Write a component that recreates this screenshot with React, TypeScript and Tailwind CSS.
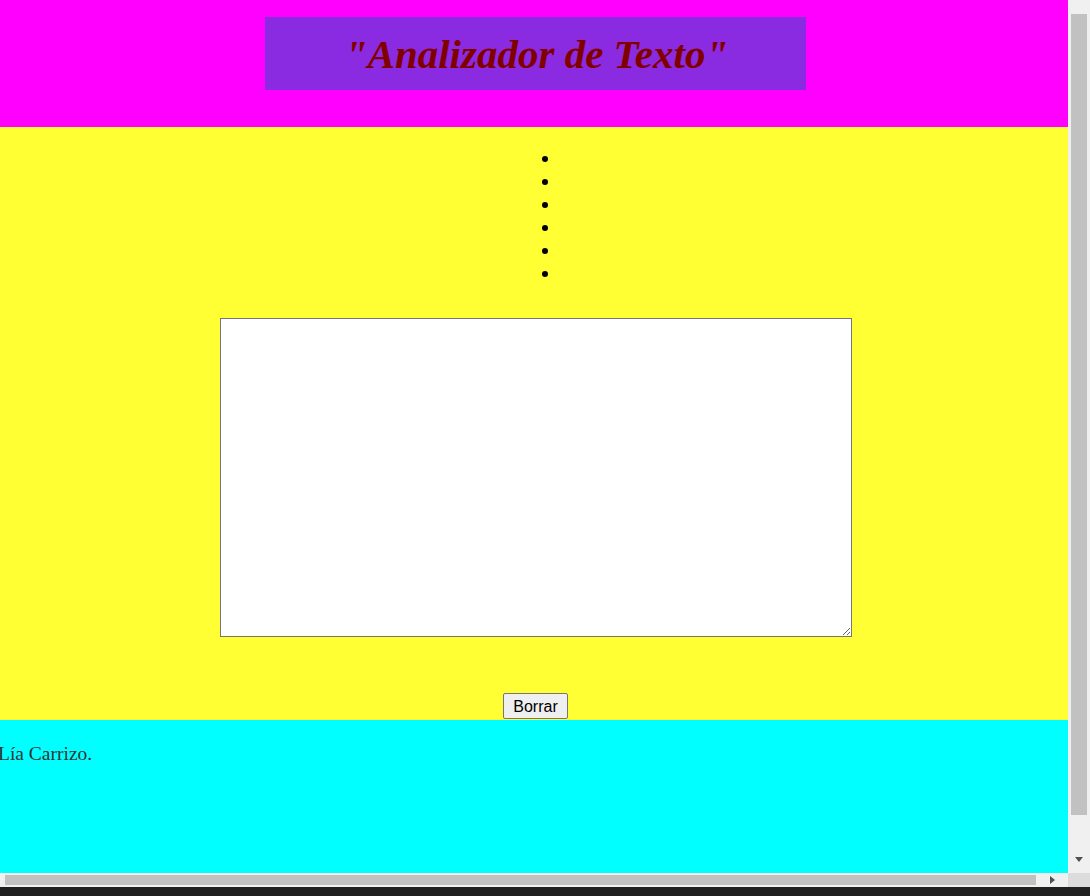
import React from 'react';

export default function App() {
  const items = [1, 2, 3, 4, 5, 6];
  return (
    <div className="flex flex-col w-[1090px] h-[896px] overflow-hidden bg-[#f0f0f0]">
      <div className="flex flex-1 min-h-0">
        <div className="flex flex-col w-[1068px] overflow-hidden">
          <header className="h-[127px] bg-[#ff00ff] flex justify-center pt-[17px]">
            <div className="w-[541px] h-[73px] ml-[3px] bg-[#8a2be2] flex items-center justify-center">
              <h1 className="font-['Liberation_Serif',serif] italic font-bold text-[41px] text-[#800000] leading-none pt-[2px] pl-[2px]">
                "Analizador de Texto"
              </h1>
            </div>
          </header>
          <main className="h-[593px] bg-[#ffff33] flex flex-col items-center">
            <ul className="flex flex-col items-center pt-[20px] pl-[22px]">
              {items.map((i) => (
                <li key={i} className="h-[23px] flex items-center justify-center">
                  <span className="block w-[6px] h-[6px] rounded-full bg-black" />
                </li>
              ))}
            </ul>
            <textarea
              className="mt-[33px] ml-[4px] w-[632px] h-[319px] bg-white border border-[#767676] outline-none"
            />
            <button className="mt-[56px] ml-[3px] w-[65px] h-[26px] pt-[1px] bg-[#efefef] border border-[#767676] rounded-[2px] font-['Liberation_Sans',sans-serif] text-[16px] text-black leading-none">
              Borrar
            </button>
          </main>
          <footer className="flex-1 bg-[#00ffff] overflow-hidden pt-[19px]">
            <p className="font-['Liberation_Serif',serif] text-[19.5px] text-[#333] -ml-[2px] whitespace-nowrap">
              Lía Carrizo.
            </p>
          </footer>
        </div>
        <div className="w-[22px] flex flex-col bg-[#f0f0f0]">
          <div className="h-[14px]" />
          <div className="flex-1 mx-[3px] bg-[#c1c1c1] mb-[30px]" />
          <div className="h-[28px] flex items-center justify-center">
            <span className="block w-0 h-0 border-l-[4px] border-r-[4px] border-t-[5px] border-l-transparent border-r-transparent border-t-[#505050]" />
          </div>
        </div>
      </div>
      <div className="h-[14px] flex bg-[#f0f0f0]">
        <div className="w-[5px]" />
        <div className="w-[1031px] my-[2px] bg-[#c1c1c1]" />
        <div className="w-[32px] flex items-center justify-center">
          <span className="block w-0 h-0 border-t-[4px] border-b-[4px] border-l-[5px] border-t-transparent border-b-transparent border-l-[#505050]" />
        </div>
        <div className="w-[22px] bg-[#dcdcdc]" />
      </div>
      <div className="h-[9px] bg-[#202020]" />
    </div>
  );
}
